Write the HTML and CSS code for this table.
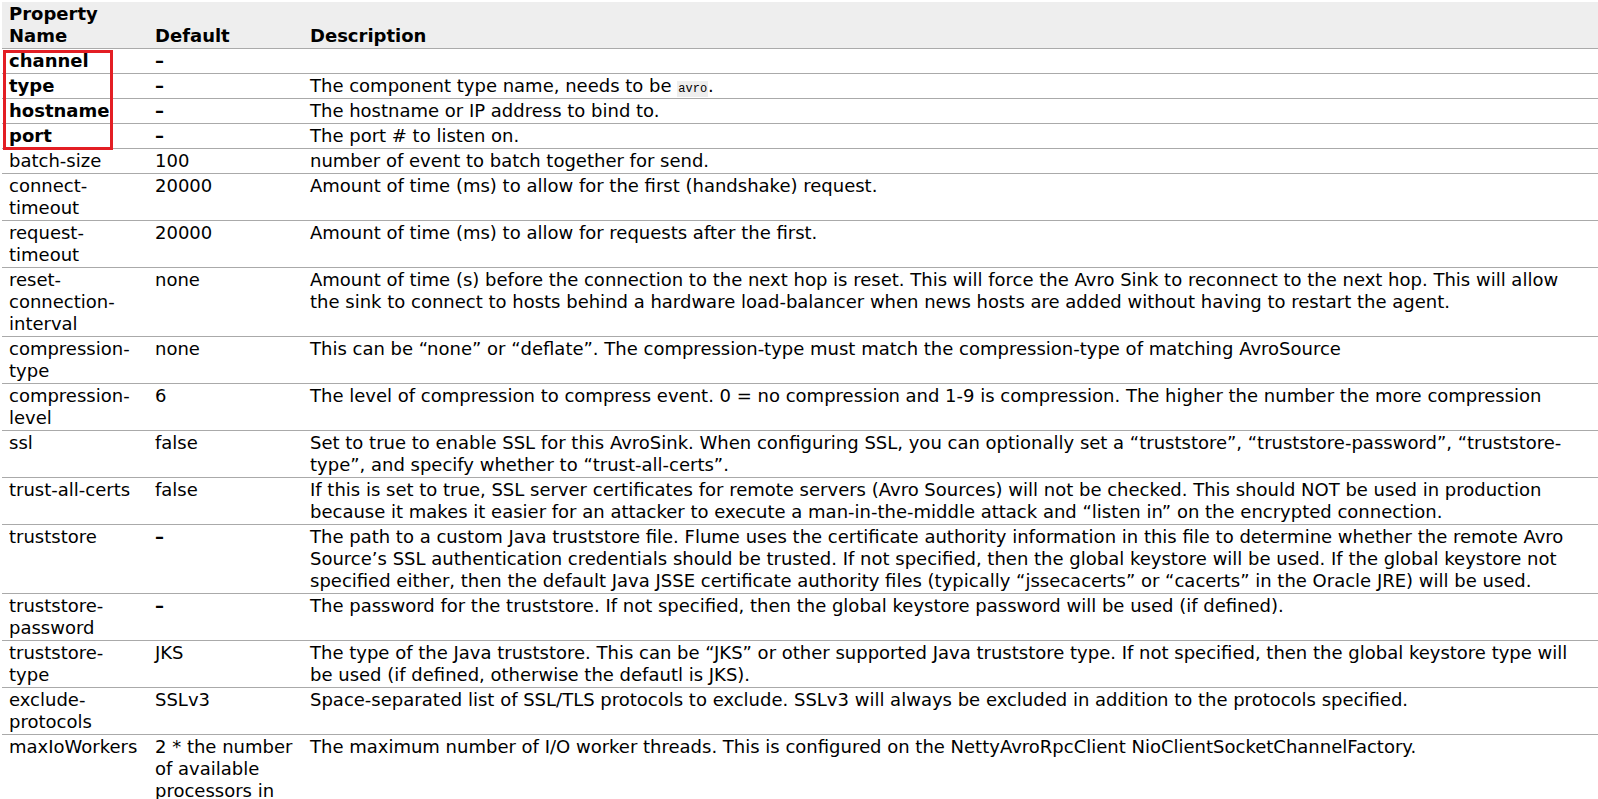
FILE: index.html
```html
<!DOCTYPE html>
<html>
<head>
<meta charset="utf-8">
<link rel="stylesheet" href="styles.css">
</head>
<body>
<div class="wrap">
<table class="props">
  <colgroup>
    <col class="c-name">
    <col class="c-default">
    <col class="c-desc">
  </colgroup>
  <thead>
    <tr><th>Property Name</th><th>Default</th><th>Description</th></tr>
  </thead>
  <tbody>
    <tr><td><strong>channel</strong></td><td><span class="dash">–</span></td><td>&nbsp;</td></tr>
    <tr><td><strong>type</strong></td><td><span class="dash">–</span></td><td>The component type name, needs to be <code>avro</code>.</td></tr>
    <tr><td><strong>hostname</strong></td><td><span class="dash">–</span></td><td>The hostname or IP address to bind to.</td></tr>
    <tr><td><strong>port</strong></td><td><span class="dash">–</span></td><td>The port # to listen on.</td></tr>
    <tr><td>batch-size</td><td>100</td><td>number of event to batch together for send.</td></tr>
    <tr><td>connect-timeout</td><td>20000</td><td>Amount of time (ms) to allow for the first (handshake) request.</td></tr>
    <tr><td>request-timeout</td><td>20000</td><td>Amount of time (ms) to allow for requests after the first.</td></tr>
    <tr><td>reset-connection-interval</td><td>none</td><td>Amount of time (s) before the connection to the next hop is reset. This will force the Avro Sink to reconnect to the next hop. This will allow the sink to connect to hosts behind a hardware load-balancer when news hosts are added without having to restart the agent.</td></tr>
    <tr><td>compression-type</td><td>none</td><td>This can be “none” or “deflate”. The compression-type must match the compression-type of matching AvroSource</td></tr>
    <tr><td>compression-level</td><td>6</td><td>The level of compression to compress event. 0 = no compression and 1-9 is compression. The higher the number the more compression</td></tr>
    <tr><td>ssl</td><td>false</td><td>Set to true to enable SSL for this AvroSink. When configuring SSL, you can optionally set a “truststore”, “truststore-password”, “truststore-type”, and specify whether to “trust-all-certs”.</td></tr>
    <tr><td>trust-all-certs</td><td>false</td><td>If this is set to true, SSL server certificates for remote servers (Avro Sources) will not be checked. This should NOT be used in production because it makes it easier for an attacker to execute a man-in-the-middle attack and “listen in” on the encrypted connection.</td></tr>
    <tr><td>truststore</td><td><span class="dash">–</span></td><td>The path to a custom Java truststore file. Flume uses the certificate authority information in this file to determine whether the remote Avro Source’s SSL authentication credentials should be trusted. If not specified, then the global keystore will be used. If the global keystore not specified either, then the default Java JSSE certificate authority files (typically “jssecacerts” or “cacerts” in the Oracle JRE) will be used.</td></tr>
    <tr><td>truststore-password</td><td><span class="dash">–</span></td><td>The password for the truststore. If not specified, then the global keystore password will be used (if defined).</td></tr>
    <tr><td>truststore-type</td><td>JKS</td><td>The type of the Java truststore. This can be “JKS” or other supported Java truststore type. If not specified, then the global keystore type will be used (if defined, otherwise the defautl is JKS).</td></tr>
    <tr><td>exclude-protocols</td><td>SSLv3</td><td>Space-separated list of SSL/TLS protocols to exclude. SSLv3 will always be excluded in addition to the protocols specified.</td></tr>
    <tr><td>maxIoWorkers</td><td>2 * the number of available processors in the machine</td><td>The maximum number of I/O worker threads. This is configured on the NettyAvroRpcClient NioClientSocketChannelFactory.</td></tr>
  </tbody>
</table>
<div class="highlight"></div>
</div>
</body>
</html>
```
FILE: styles.css
```css
html, body {
  margin: 0;
  padding: 0;
  background: #ffffff;
}
body {
  padding: 2px 0 0 2px;
  font-family: "DejaVu Sans", Verdana, sans-serif;
  font-size: 18px;
  line-height: 22px;
  color: #000;
}
.wrap {
  position: relative;
}
.props {
  border-collapse: collapse;
  table-layout: fixed;
  width: 1596px;
}
.c-name { width: 146px; }
.c-default { width: 155px; }
.props th,
.props td {
  padding: 1px 7px 1px 7px;
  text-align: left;
  vertical-align: top;
  border-bottom: 1px solid #aaaaaa;
  word-wrap: break-word;
}
.props thead th {
  background: #eeeeee;
  font-weight: bold;
  vertical-align: bottom;
}
.props strong {
  font-weight: bold;
}
.dash {
  font-weight: bold;
}
.props code {
  font-family: "Liberation Mono", "Courier New", monospace;
  font-size: 12px;
  line-height: 12px;
  background: #eeeeee;
  padding: 1px 1px;
}
.highlight {
  position: absolute;
  left: 1px;
  top: 48px;
  width: 104px;
  height: 94px;
  border: 3px solid #e31e24;
  pointer-events: none;
}
```
